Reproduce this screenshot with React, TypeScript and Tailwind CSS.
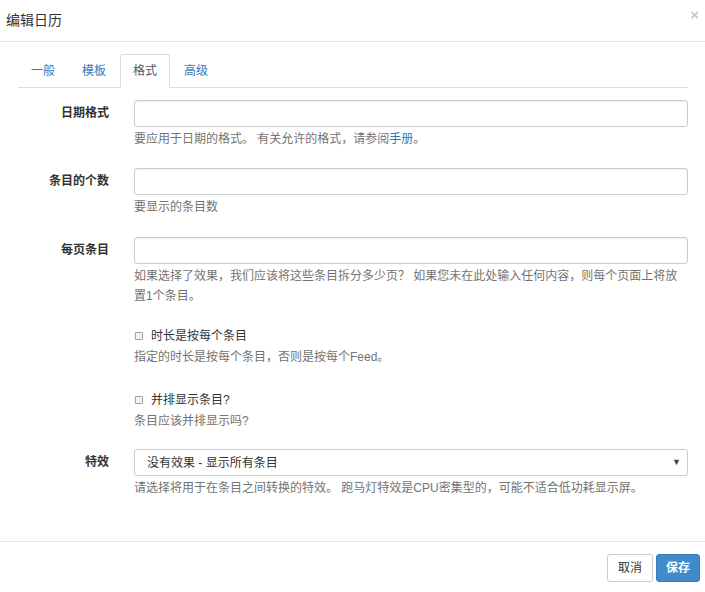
import React from "react";

const font = {
  fontFamily:
    '"Liberation Sans", "Noto Sans CJK SC", "Noto Sans", sans-serif',
};

function Row({
  label,
  children,
  help,
  className = "",
}: {
  label?: string;
  children: React.ReactNode;
  help?: React.ReactNode;
  className?: string;
}) {
  return (
    <div className={`flex ${className}`}>
      <div className="w-[116px] shrink-0 pr-[25px] text-right">
        {label && (
          <label className="block h-[27px] text-[12px] font-bold leading-[27px] text-[#333]">
            {label}
          </label>
        )}
      </div>
      <div className="min-w-0 flex-1">
        {children}
        {help && (
          <p className="mt-[2px] text-[12px] leading-[20px] text-[#737373]">{help}</p>
        )}
      </div>
    </div>
  );
}

function TextInput() {
  return (
    <div className="h-[27px] rounded-[3px] border border-[#ccc] bg-white shadow-[inset_0_1px_1px_rgba(0,0,0,0.075)]" />
  );
}

function Check({ text, help }: { text: string; help: string }) {
  return (
    <div>
      <label className="flex h-[20px] items-center text-[12px] text-[#333]">
        <span className="mr-[8px] ml-[1px] inline-block h-[8px] w-[8px] rounded-[1px] border border-[#a0a0a0] bg-[#f3f3f3]" />
        {text}
      </label>
      <p className="mt-[1px] text-[12px] leading-[20px] text-[#737373]">{help}</p>
    </div>
  );
}

export default function App() {
  const tabs = ["一般", "模板", "格式", "高级"];
  return (
    <div className="h-[592px] w-[705px] overflow-hidden bg-white" style={font}>
      {/* header */}
      <div className="flex h-[42px] items-center justify-between border-b border-[#e5e5e5] pl-[6px] pr-[6px]">
        <h4 className="text-[14px] text-[#333]">编辑日历</h4>
        <span className="-mt-[12px] text-[15px] font-bold leading-none text-[#c8c8c8]">×</span>
      </div>

      {/* body */}
      <div className="pl-[18px] pr-[17px]">
        <ul className="mt-[12px] flex border-b border-[#ddd] text-[12px]">
          {tabs.map((t) => (
            <li key={t} className="mr-[1px] -mb-px">
              {t === "格式" ? (
                <span className="block h-[34px] rounded-t-[3px] border border-b-white border-[#ddd] bg-white px-[12px] leading-[32px] text-[#555]">
                  {t}
                </span>
              ) : (
                <span className="block h-[34px] border border-transparent px-[12px] leading-[32px] text-[#337ab7]">
                  {t}
                </span>
              )}
            </li>
          ))}
        </ul>

        <div className="pt-[12px]">
          <Row
            label="日期格式"
            help={
              <>
                要应用于日期的格式。 有关允许的格式，请参阅
                <span className="text-[#337ab7]">手册</span>。
              </>
            }
          >
            <TextInput />
          </Row>

          <Row className="mt-[19px]" label="条目的个数" help="要显示的条目数">
            <TextInput />
          </Row>

          <Row
            className="mt-[20px]"
            label="每页条目"
            help="如果选择了效果，我们应该将这些条目拆分多少页？ 如果您未在此处输入任何内容，则每个页面上将放置1个条目。"
          >
            <TextInput />
          </Row>

          <Row className="mt-[20px]">
            <Check text="时长是按每个条目" help="指定的时长是按每个条目，否则是按每个Feed。" />
          </Row>

          <Row className="mt-[23px]">
            <Check text="并排显示条目?" help="条目应该并排显示吗?" />
          </Row>

          <Row
            className="mt-[18px]"
            label="特效"
            help="请选择将用于在条目之间转换的特效。 跑马灯特效是CPU密集型的，可能不适合低功耗显示屏。"
          >
            <div className="flex h-[27px] items-center justify-between rounded-[3px] border border-[#ccc] bg-white pl-[12px] pr-[6px] text-[12px] text-[#333]">
              <span>没有效果 - 显示所有条目</span>
              <span className="text-[9px] text-[#444]">▼</span>
            </div>
          </Row>
        </div>
      </div>

      {/* footer */}
      <div className="mt-[43px] flex justify-end gap-[3px] border-t border-[#e5e5e5] pr-[5px] pt-[12px]">
        <button className="h-[28px] w-[46px] rounded-[3px] border border-[#ccc] bg-white text-[12px] text-[#333]">
          取消
        </button>
        <button className="h-[28px] w-[44px] rounded-[3px] border border-[#357ebd] bg-[#428bca] text-[12px] font-bold text-white">
          保存
        </button>
      </div>
    </div>
  );
}
